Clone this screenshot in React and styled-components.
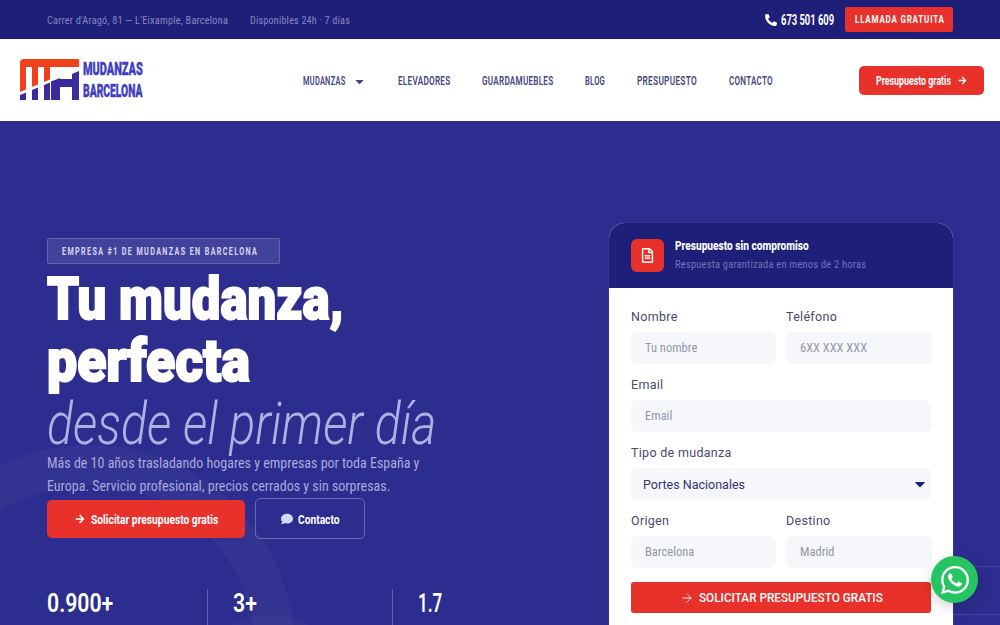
import React from 'react';
import styled, { createGlobalStyle } from 'styled-components';
import { FaPhoneAlt, FaArrowRight, FaCaretDown, FaComment, FaRegFileAlt, FaWhatsapp } from 'react-icons/fa';
import { ArrowRight } from 'lucide-react';

const GlobalStyle = createGlobalStyle`
    * { box-sizing: border-box; }
    html, body { margin: 0; height: 625px; overflow: hidden; }
    body { font-family: Roboto, "Liberation Sans", sans-serif; }
`;

// no condensed family is installed, so the narrow text is scaled down to its width
const Squeeze = styled.span`
    display: block;
    flex: none;
    width: ${p => p.$w}px;
    white-space: nowrap;
    transform: scaleX(${p => p.$x});
    transform-origin: left center;
`;

const Page = styled.div`
    width: 1000px;
    height: 625px;
    overflow: hidden;
    position: relative;
`;

const TopBar = styled.div`
    height: 39px;
    background: #1e1f78;
    padding: 0 47px;
    display: flex;
    align-items: center;
    justify-content: space-between;
`;

const TopInfo = styled.div`
    display: flex;
    gap: 22px;
    font-size: 11.5px;
    font-stretch: 75%;
    letter-spacing: 0.2px;
    color: #8487c6;
`;

const TopActions = styled.div`
    display: flex;
    align-items: center;
    gap: 11px;
`;

const Phone = styled.span`
    display: flex;
    align-items: center;
    gap: 4px;
    color: #fff;
    font-size: 14px;
    font-weight: 700;
`;

const CallButton = styled.a`
    width: 108px;
    height: 25px;
    display: flex;
    align-items: center;
    justify-content: center;
    background: #e8312a;
    border-radius: 2px;
    color: #fff;
    font-size: 10px;
    font-weight: 700;
    letter-spacing: 1px;
    text-transform: uppercase;
`;

const Nav = styled.nav`
    height: 82px;
    background: #fff;
    padding: 0 16px 0 20px;
    display: flex;
    align-items: center;
`;

const Logo = styled.div`
    display: flex;
    align-items: center;
    gap: 3px;
`;

const LogoText = styled.div`
    color: #3f3fbf;
    font-size: 18.5px;
    line-height: 22px;
    font-weight: 900;
    -webkit-text-stroke: 0.4px #3f3fbf;
    text-transform: uppercase;
`;

const Menu = styled.div`
    display: flex;
    align-items: center;
    gap: 32px;
    margin: 2px 0 0 160px;
`;

const MenuItem = styled.a`
    display: flex;
    align-items: center;
    gap: 7px;
    color: #45467f;
    font-size: 12px;
    font-weight: 600;
    letter-spacing: 0.4px;
    text-transform: uppercase;
`;

const NavCta = styled.a`
    width: 125px;
    height: 29px;
    margin-left: auto;
    display: flex;
    align-items: center;
    justify-content: center;
    gap: 7px;
    background: #e8312a;
    border-radius: 5px;
    color: #fff;
    font-size: 12.5px;
    font-weight: 700;
`;

const Hero = styled.section`
    position: relative;
    height: 504px;
    background: #2d2d8f;
    padding: 102px 47px 0;
    display: flex;
    justify-content: space-between;
    overflow: hidden;
`;

const Ring = styled.div`
    position: absolute;
    left: ${p => p.$left}px;
    top: ${p => p.$top}px;
    width: ${p => p.$size}px;
    height: ${p => p.$size}px;
    border: ${p => p.$thick}px solid rgba(255, 255, 255, 0.03);
    border-radius: 50%;
`;

const GridLine = styled.div`
    position: absolute;
    right: 0;
    top: ${p => p.$top}px;
    width: 47px;
    height: 1px;
    background: rgba(255, 255, 255, 0.12);
`;

const Left = styled.div`
    position: relative;
    padding-top: 15px;
    width: 440px;
`;

const Badge = styled.div`
    width: 233px;
    height: 26px;
    display: flex;
    align-items: center;
    padding-left: 14px;
    background: rgba(255, 255, 255, 0.1);
    border: 1px solid rgba(255, 255, 255, 0.18);
    border-radius: 2px;
    color: #d5d7f5;
    font-size: 10.5px;
    font-weight: 700;
    letter-spacing: 2px;
`;

const Title = styled.h1`
    margin: 4px 0 0;
    color: #fff;
    font-size: 60px;
    line-height: 62px;
    font-weight: 900;
    -webkit-text-stroke: 2px #fff;
`;

const TitleLight = styled.em`
    display: block;
    margin-top: 4px;
    color: #aeb1e2;
    font-size: 60px;
    line-height: 56px;
    font-weight: 300;
    -webkit-text-stroke: 0;
`;

const Lead = styled.p`
    margin: 0;
    width: 400px;
    color: #a7aadc;
    font-size: 14px;
    line-height: 23px;
    font-stretch: 75%;
`;

const Actions = styled.div`
    display: flex;
    align-items: center;
    gap: 10px;
`;

const PrimaryButton = styled.a`
    width: 198px;
    height: 38px;
    display: flex;
    align-items: center;
    justify-content: center;
    gap: 6px;
    background: #e8312a;
    border-radius: 5px;
    color: #fff;
    font-size: 13.5px;
    font-weight: 700;
`;

const GhostButton = styled.a`
    width: 110px;
    height: 41px;
    display: flex;
    align-items: center;
    justify-content: center;
    gap: 5px;
    border: 1px solid rgba(255, 255, 255, 0.28);
    border-radius: 5px;
    color: #fff;
    font-size: 13.5px;
    font-weight: 700;

    svg { color: #d5d7f5; }
`;

const Stats = styled.div`
    display: flex;
    margin-top: 50px;
`;

const Stat = styled.div`
    flex: none;
    width: 185px;
    height: 60px;
    padding-left: 25px;
    border-left: 1px solid rgba(255, 255, 255, 0.25);
    color: #fff;
    font-size: 25px;
    line-height: 30px;
    font-weight: 600;

    &:first-child {
        width: 160px;
        padding-left: 0;
        border-left: 0;
    }
`;

const Card = styled.aside`
    position: relative;
    width: 344px;
    align-self: flex-start;
    border-radius: 16px 16px 0 0;
    overflow: hidden;
    background: #fff;
    box-shadow: 0 0 0 1px rgba(255, 255, 255, 0.04);
`;

const CardHead = styled.div`
    height: 65px;
    background: #1e1f78;
    padding: 0 22px;
    display: flex;
    align-items: center;
    gap: 11px;
`;

const CardIcon = styled.div`
    width: 33px;
    height: 33px;
    display: flex;
    align-items: center;
    justify-content: center;
    background: #e8312a;
    border-radius: 6px;
    color: #fff;
`;

const CardText = styled.div`
    margin-top: -2px;
`;

const CardTitle = styled.div`
    color: #fff;
    font-size: 13px;
    line-height: 16px;
    font-weight: 800;
`;

const CardSub = styled.div`
    margin-top: 4px;
    color: #7174b8;
    font-size: 10.5px;
    line-height: 14px;
    font-stretch: 75%;
    letter-spacing: 0.2px;
`;

const Form = styled.div`
    padding: 21px 22px 30px;
    display: flex;
    flex-direction: column;
`;

const Row = styled.div`
    display: grid;
    grid-template-columns: 145px 146px;
    gap: 10px;
`;

const Field = styled.div`
    display: flex;
    flex-direction: column;
    margin-bottom: 13px;
`;

const Label = styled.label`
    height: 16px;
    margin-bottom: 7px;
    color: #4a4a6e;
    font-size: 12.5px;
    line-height: 16px;
    letter-spacing: 0.3px;
`;

const Input = styled.div`
    height: 32px;
    display: flex;
    align-items: center;
    justify-content: space-between;
    padding: ${p => (p.$select ? '0 3px 0 12px' : '0 14px 2px')};
    background: #f6f7fb;
    border-radius: 6px;
    color: ${p => (p.$select ? '#35356e' : '#9396a8')};
    font-size: 12.5px;
    font-stretch: ${p => (p.$select ? '100%' : '85%')};
`;

const Submit = styled.a`
    height: 31px;
    margin-top: 1px;
    display: flex;
    align-items: center;
    justify-content: center;
    gap: 5px;
    background: #e8312a;
    border-radius: 3px;
    color: #fff;
    font-size: 12.5px;
    font-weight: 500;
    text-transform: uppercase;
`;

const WhatsApp = styled.a`
    position: absolute;
    left: 931px;
    top: 556px;
    width: 47px;
    height: 47px;
    display: flex;
    align-items: center;
    justify-content: center;
    background: #27c463;
    border-radius: 50%;
    color: #fff;
    box-shadow: 0 4px 14px rgba(0, 0, 0, 0.18);
`;

const MENU = [
    { label: 'Elevadores', width: 52, squeeze: 0.68 },
    { label: 'Guardamuebles', width: 71, squeeze: 0.675 },
    { label: 'Blog', width: 20, squeeze: 0.63 },
    { label: 'Presupuesto', width: 60, squeeze: 0.69 },
    { label: 'Contacto', width: 44, squeeze: 0.67 },
];

function App() {
    return (
        <Page>
            <GlobalStyle />
            <TopBar>
                <TopInfo>
                    <Squeeze $w={181} $x={0.9}>Carrer d'Aragó, 81 — L'Eixample, Barcelona</Squeeze>
                    <Squeeze $w={100} $x={0.885}>Disponibles 24h · 7 días</Squeeze>
                </TopInfo>
                <TopActions>
                    <Phone><FaPhoneAlt size={12} /><Squeeze $w={53} $x={0.67}>673 501 609</Squeeze></Phone>
                    <CallButton><Squeeze $w={88} $x={0.8}>Llamada gratuita</Squeeze></CallButton>
                </TopActions>
            </TopBar>
            <Nav>
                <Logo>
                    <svg width="60" height="42" viewBox="0 0 60 42">
                        <path fill="#f0401c" d="M0 4Q0 0 4 0H59V8H18V25.5L12 28V8H6V30.5L0 33ZM24 8H30V20.5L24 23Z" />
                        <path fill="#3a2c9e" d="M0 36L6 33.5V41H0ZM12 31L18 28.5V41H12ZM24 26L30 23.5V41H24ZM31 22.5L40 19V20H52V15L59 12V41H52V28H40V41H31Z" />
                    </svg>
                    <LogoText>
                        <Squeeze $w={60} $x={0.59}>Mudanzas</Squeeze>
                        <Squeeze $w={60} $x={0.556}>Barcelona</Squeeze>
                    </LogoText>
                </Logo>
                <Menu>
                    <MenuItem><Squeeze $w={43} $x={0.62}>Mudanzas</Squeeze><FaCaretDown size={13} /></MenuItem>
                    {MENU.map(item => (
                        <MenuItem key={item.label}><Squeeze $w={item.width} $x={item.squeeze}>{item.label}</Squeeze></MenuItem>
                    ))}
                </Menu>
                <NavCta><Squeeze $w={75} $x={0.705}>Presupuesto gratis</Squeeze><FaArrowRight size={9} /></NavCta>
            </Nav>
            <Hero>
                <Ring $left={-115} $top={324} $size={410} $thick={40} />
                <Ring $left={185} $top={494} $size={170} $thick={30} />
                <GridLine $top={445} />
                <GridLine $top={493} />
                <Left>
                    <Badge><Squeeze $w={196} $x={0.684}>EMPRESA #1 DE MUDANZAS EN BARCELONA</Squeeze></Badge>
                    <Title>
                        <Squeeze $w={296} $x={0.85}>Tu mudanza,</Squeeze>
                        <Squeeze $w={202} $x={0.893}>perfecta</Squeeze>
                        <TitleLight><Squeeze $w={387} $x={0.805}>desde el primer día</Squeeze></TitleLight>
                    </Title>
                    <Lead>Más de 10 años trasladando hogares y empresas por toda España y<br />Europa. Servicio profesional, precios cerrados y sin sorpresas.</Lead>
                    <Actions>
                        <PrimaryButton><FaArrowRight size={10} /><Squeeze $w={127} $x={0.76}>Solicitar presupuesto gratis</Squeeze></PrimaryButton>
                        <GhostButton><FaComment size={12} /><Squeeze $w={41} $x={0.757}>Contacto</Squeeze></GhostButton>
                    </Actions>
                    <Stats>
                        <Stat><Squeeze $w={66} $x={0.85}>0.900+</Squeeze></Stat>
                        <Stat><Squeeze $w={23} $x={0.85}>3+</Squeeze></Stat>
                        <Stat><Squeeze $w={23} $x={0.68}>1.7</Squeeze></Stat>
                    </Stats>
                </Left>
                <Card>
                    <CardHead>
                        <CardIcon><FaRegFileAlt size={15} /></CardIcon>
                        <CardText>
                            <CardTitle><Squeeze $w={134} $x={0.78}>Presupuesto sin compromiso</Squeeze></CardTitle>
                            <CardSub>Respuesta garantizada en menos de 2 horas</CardSub>
                        </CardText>
                    </CardHead>
                    <Form>
                        <Row>
                            <Field><Label>Nombre</Label><Input>Tu nombre</Input></Field>
                            <Field><Label>Teléfono</Label><Input>6XX XXX XXX</Input></Field>
                        </Row>
                        <Field><Label>Email</Label><Input>Email</Input></Field>
                        <Field>
                            <Label>Tipo de mudanza</Label>
                            <Input $select>Portes Nacionales <FaCaretDown size={16} color="#1e1f78" /></Input>
                        </Field>
                        <Row>
                            <Field><Label>Origen</Label><Input>Barcelona</Input></Field>
                            <Field><Label>Destino</Label><Input>Madrid</Input></Field>
                        </Row>
                        <Submit><ArrowRight size={14} strokeWidth={1.5} /><Squeeze $w={184} $x={0.94}>Solicitar presupuesto gratis</Squeeze></Submit>
                    </Form>
                </Card>
            </Hero>
            <WhatsApp><FaWhatsapp size={32} /></WhatsApp>
        </Page>
    );
}

export default App;
